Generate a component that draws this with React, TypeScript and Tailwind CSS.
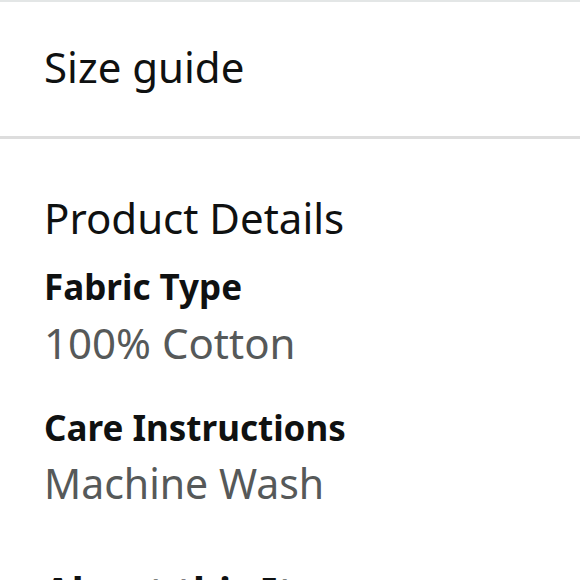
export default function App() {
  return (
    <div className="w-[580px] h-[580px] overflow-hidden bg-white font-['Noto_Sans',sans-serif] text-[#0f1111]">
      <div className="border-t-2 border-[#e3e6e6]" />
      <div className="h-[134px] px-[44px] pt-[44px]">
        <span className="block text-[42px] leading-[42px]">Size guide</span>
      </div>
      <div className="h-[3px] bg-[#dddddd]" />
      <div className="px-[44px] pt-[55px]">
        <h2 className="text-[42px] leading-[48px]">Product Details</h2>
        <div className="mt-[25px] flex flex-col gap-[11px]">
          <div className="text-[35px] font-bold leading-[40px]">Fabric Type</div>
          <div className="text-[42px] leading-[50px] text-[#565959]">100% Cotton</div>
        </div>
        <div className="mt-[40px] flex flex-col gap-[10px]">
          <div className="text-[35px] font-bold leading-[40px]">Care Instructions</div>
          <div className="text-[41px] leading-[50px] text-[#565959]">Machine Wash</div>
        </div>
        <div className="mt-[59px] text-[40px] font-bold leading-[48px]">About this Item</div>
      </div>
    </div>
  );
}
